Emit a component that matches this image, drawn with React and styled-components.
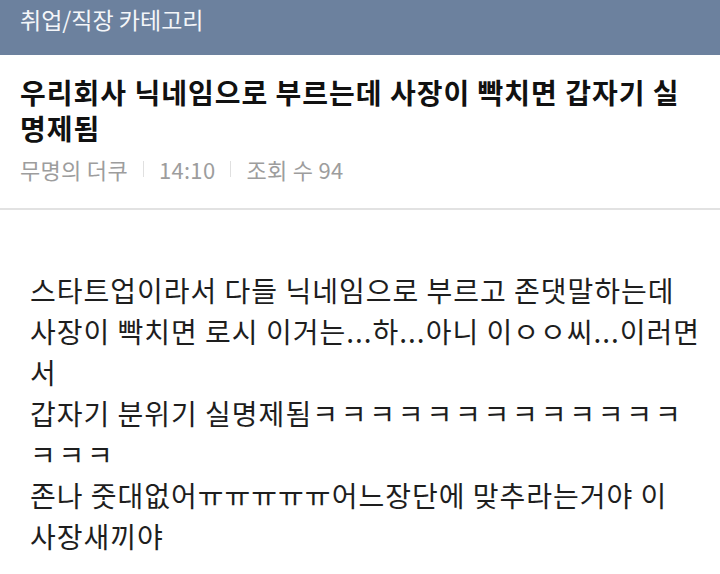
import React from "react";
import styled, { createGlobalStyle } from "styled-components";

const GlobalStyle = createGlobalStyle`
  html, body {
    margin: 0;
    padding: 0;
    background: #fff;
  }
  body {
    font-family: "Noto Sans CJK KR", "Noto Sans", sans-serif;
    overflow: hidden;
  }
`;

const App = () => {
  return (
    <Page>
      <GlobalStyle />
      <CategoryBar>취업/직장 카테고리</CategoryBar>
      <PostHead>
        <Title>
          우리회사 닉네임으로 부르는데 사장이 빡치면 갑자기 실<br />
          명제됨
        </Title>
        <Meta>
          <span>무명의 더쿠</span>
          <Sep />
          <span>14:10</span>
          <Sep />
          <span>조회 수 94</span>
        </Meta>
      </PostHead>
      <Body>
        <p>스타트업이라서 다들 닉네임으로 부르고 존댓말하는데</p>
        <p>
          사장이 빡치면 로시 이거는...하...아니 이ㅇㅇ씨...이러면
          <br />서
        </p>
        <p>
          갑자기 분위기 실명제됨<Jamo>ㅋㅋㅋㅋㅋㅋㅋㅋㅋㅋㅋㅋㅋ</Jamo>
          <br />
          <Jamo>ㅋㅋㅋ</Jamo>
        </p>
        <p>
          존나 줏대없어ㅠㅠㅠㅠㅠ어느장단에 맞추라는거야 이
          <br />사장새끼야
        </p>
      </Body>
    </Page>
  );
};

const Page = styled.div`
  width: 720px;
  min-height: 574px;
  background: #fff;
`;

const CategoryBar = styled.div`
  height: 55px;
  box-sizing: border-box;
  padding: 3px 20px 0;
  background: #6c819e;
  color: #f4f6f9;
  font-size: 23px;
  line-height: 32px;
`;

const PostHead = styled.div`
  padding: 19px 20px 25px;
  border-bottom: 2px solid #e2e2e2;
`;

const Title = styled.h1`
  margin: 0;
  font-size: 28px;
  font-weight: 700;
  line-height: 36px;
  color: #111;
  letter-spacing: 1px;
  white-space: nowrap;
`;

const Meta = styled.div`
  display: flex;
  align-items: center;
  gap: 15px;
  margin-top: 9px;
  font-size: 22px;
  line-height: 28px;
  color: #9d9d9d;
  letter-spacing: 0.3px;
`;

const Sep = styled.i`
  display: block;
  width: 1px;
  height: 16px;
  background: #e0e0e0;
`;

const Body = styled.div`
  padding: 60px 30px 0;
  font-size: 28px;
  line-height: 41px;
  color: #1e1e1e;
  letter-spacing: 1px;
  white-space: nowrap;
  p {
    margin: 0;
  }
`;

const Jamo = styled.span`
  letter-spacing: 2.8px;
`;

export default App;
